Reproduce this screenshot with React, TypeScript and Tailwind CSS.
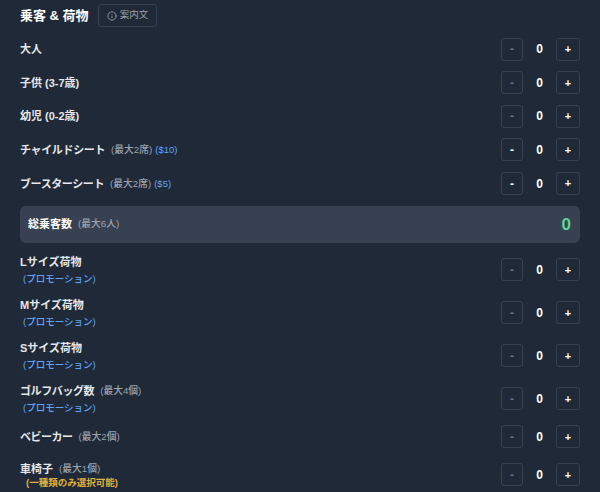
import { Info } from "lucide-react";

type Item = {
  label: string;
  note?: string;
  price?: string;
  sub?: string;
  subClass?: string;
  labelClass?: string;
  minusOn?: boolean;
  rowClass: string;
};

const seats: Item[] = [
  { label: "大人", rowClass: "h-[33.6px]" },
  { label: "子供 (3-7歳)", rowClass: "h-[33.6px]" },
  { label: "幼児 (0-2歳)", rowClass: "h-[33.6px]" },
  { label: "チャイルドシート", labelClass: "tracking-[-0.35px]", note: "(最大2席)", price: "($10)", minusOn: true, rowClass: "h-[33.6px]" },
  { label: "ブースターシート", labelClass: "tracking-[-0.4px]", note: "(最大2席)", price: "($5)", minusOn: true, rowClass: "h-[33.6px]" },
];

const luggage: Item[] = [
  { label: "Lサイズ荷物", sub: "(プロモーション)", rowClass: "h-[43px]" },
  { label: "Mサイズ荷物", sub: "(プロモーション)", rowClass: "h-[43px]" },
  { label: "Sサイズ荷物", sub: "(プロモーション)", rowClass: "h-[43px]" },
  { label: "ゴルフバッグ数", labelClass: "tracking-[-0.4px]", note: "(最大4個)", sub: "(プロモーション)", rowClass: "h-[43px]" },
  { label: "ベビーカー", labelClass: "tracking-[-0.5px]", note: "(最大2個)", rowClass: "h-[33px]" },
  {
    label: "車椅子",
    note: "(最大1個)",
    sub: "(一種類のみ選択可能)",
    subClass: "text-[#e0b03c] font-semibold pl-1.5 leading-[12px]",
    rowClass: "h-[43px]",
  },
];

function Row({ item }: { item: Item }) {
  return (
    <div className={`flex items-center justify-between ${item.rowClass}`}>
      <div>
        <div className="flex items-center">
          <span className={`text-[11px] leading-[16px] font-semibold text-[#e5e7eb] ${item.labelClass ?? ""}`}>{item.label}</span>
          {item.note && <span className="ml-1.5 text-[9.75px] leading-[16px] font-medium text-[#9ca3af]">{item.note}</span>}
          {item.price && <span className="ml-[3px] text-[9.5px] leading-[16px] font-medium text-[#60a5fa]">{item.price}</span>}
        </div>
        {item.sub && (
          <div className={item.subClass ? `text-[9.5px] ${item.subClass}` : "mt-[1px] text-[9.5px] leading-[15px] font-medium text-[#60a5fa] pl-[3px]"}>
            {item.sub}
          </div>
        )}
      </div>
      <div className="flex items-center">
        <button className={`w-[22px] h-[23px] flex items-center justify-center rounded-[3px] border border-[#374151] text-[12px] font-bold ${item.minusOn ? "text-white" : "text-[#6b7280]"}`}>
          -
        </button>
        <span className="w-[33px] text-center text-[12px] font-semibold text-white">0</span>
        <button className="w-[24px] h-[23px] flex items-center justify-center rounded-[3px] border border-[#374151] text-[11px] font-bold text-white">
          +
        </button>
      </div>
    </div>
  );
}

export default function App() {
  return (
    <div className="h-[492px] overflow-hidden bg-[#1f2937] px-5 pt-1 font-['Liberation_Sans','Noto_Sans_CJK_JP',sans-serif]">
      <div className="flex items-center h-[23px] mb-[5.4px]">
        <h2 className="text-[13px] font-bold text-white">乗客 &amp; 荷物</h2>
        <button className="ml-[9px] h-[23px] w-[59px] flex items-center justify-center gap-[3px] pl-[1px] rounded-[3px] border border-[#374151] text-[9.5px] text-[#9ca3af]">
          <Info size={10} />
          案内文
        </button>
      </div>
      {seats.map((s) => (
        <Row key={s.label} item={s} />
      ))}
      <div className="flex items-center justify-between h-[37px] mt-[5.6px] mb-[5.5px] pl-[8px] pr-[8px] rounded-md bg-[#374151]">
        <div className="flex items-center">
          <span className="text-[11px] font-bold text-white">総乗客数</span>
          <span className="ml-1.5 text-[9.75px] font-medium text-[#9ca3af]">(最大6人)</span>
        </div>
        <span className="text-[17px] font-bold text-[#5fd39b] mr-[1px]">0</span>
      </div>
      {luggage.map((l) => (
        <Row key={l.label} item={l} />
      ))}
    </div>
  );
}
